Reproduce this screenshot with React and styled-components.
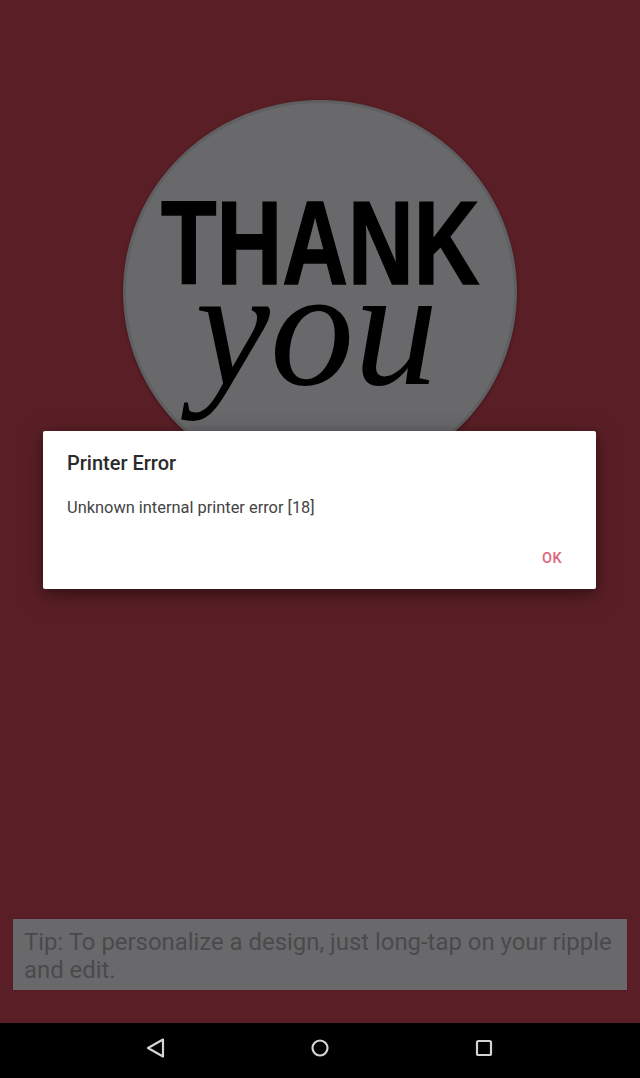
import React from "react";
import styled, { createGlobalStyle } from "styled-components";

const Global = createGlobalStyle`
  html, body { margin: 0; padding: 0; }
  body { font-family: Roboto, "Liberation Sans", sans-serif; background: #000; }
`;

const Screen = styled.div`
  position: relative;
  width: 640px;
  height: 1078px;
  display: flex;
  flex-direction: column;
  overflow: hidden;
  background: #5a1f26;
`;

const Main = styled.main`
  flex: 1;
  min-height: 0;
  display: flex;
  flex-direction: column;
  align-items: center;
  padding: 100px 13px 33px;
  box-sizing: border-box;
`;

const Ripple = styled.div`
  width: 394px;
  height: 384px;
  flex: none;
  box-sizing: border-box;
  border-radius: 50%;
  background: #69696b;
  border: 3px solid #5f5f61;
  box-shadow: 0 1px 3px rgba(40, 10, 14, 0.55);
  display: flex;
  flex-direction: column;
  align-items: center;
  color: #000;
`;

const Thank = styled.div`
  font-family: "Liberation Sans", Arial, sans-serif;
  font-weight: 700;
  font-size: 119px;
  line-height: 85px;
  margin-top: 97px;
  transform: scaleX(0.765);
  white-space: nowrap;
  -webkit-text-stroke: 1.5px #000;
`;

const You = styled.div`
  font-family: "Liberation Serif", "Times New Roman", serif;
  font-style: italic;
  font-size: 170px;
  line-height: 85px;
  transform: translateX(-3px) scaleX(0.99);
  white-space: nowrap;
`;

const Spacer = styled.div`
  flex: 1;
`;

const Tip = styled.div`
  width: 100%;
  height: 71px;
  box-sizing: border-box;
  flex: none;
  padding: 9px 11px;
  background: #69696b;
  color: #4a4a4c;
  font-size: 23.9px;
  line-height: 28px;
  box-shadow: 0 0 1px rgba(40, 10, 14, 0.6);
`;

const NavBar = styled.nav`
  height: 55px;
  flex: none;
  background: #000;
  display: flex;
  align-items: center;
  justify-content: center;
  gap: 124px;
  padding-bottom: 6px;
  box-sizing: border-box;
`;

const NavIcon = styled.svg`
  width: 40px;
  height: 24px;
  fill: none;
  stroke: #d4d4d4;
  stroke-width: 2.2;
  stroke-linejoin: round;
`;

const Dialog = styled.div`
  position: absolute;
  left: 43px;
  top: 431px;
  width: 553px;
  height: 158px;
  box-sizing: border-box;
  display: flex;
  flex-direction: column;
  padding: 21px 24px 0;
  background: #fff;
  border-radius: 2px;
  box-shadow: 0 6px 24px rgba(0, 0, 0, 0.35), 0 3px 8px rgba(0, 0, 0, 0.2);
`;

const DialogTitle = styled.h2`
  margin: 0;
  font-size: 20px;
  line-height: 22px;
  font-weight: 500;
  color: #2b2b2b;
`;

const DialogBody = styled.p`
  margin: 24px 0 0;
  font-size: 16.4px;
  line-height: 20px;
  color: #444;
`;

const DialogActions = styled.div`
  display: flex;
  justify-content: flex-end;
  margin-top: 32px;
`;

const OkButton = styled.button`
  border: 0;
  background: none;
  padding: 0;
  font-family: inherit;
  font-size: 14.5px;
  line-height: 18px;
  font-weight: 500;
  letter-spacing: 0.4px;
  color: #dc6478;
  margin-right: 10px;
`;

export default function App() {
  return (
    <>
      <Global />
      <Screen>
        <Main>
          <Ripple>
            <Thank>THANK</Thank>
            <You>you</You>
          </Ripple>
          <Spacer />
          <Tip>Tip: To personalize a design, just long-tap on your ripple and edit.</Tip>
        </Main>
        <NavBar>
          <NavIcon viewBox="0 0 40 24">
            <path d="M27 3.5 L12 12 L27 20.5 Z" />
          </NavIcon>
          <NavIcon viewBox="0 0 40 24">
            <circle cx="20" cy="12" r="7.5" />
          </NavIcon>
          <NavIcon viewBox="0 0 40 24">
            <rect x="13" y="5" width="14" height="14" rx="1.5" />
          </NavIcon>
        </NavBar>
        <Dialog>
          <DialogTitle>Printer Error</DialogTitle>
          <DialogBody>Unknown internal printer error [18]</DialogBody>
          <DialogActions>
            <OkButton>OK</OkButton>
          </DialogActions>
        </Dialog>
      </Screen>
    </>
  );
}
